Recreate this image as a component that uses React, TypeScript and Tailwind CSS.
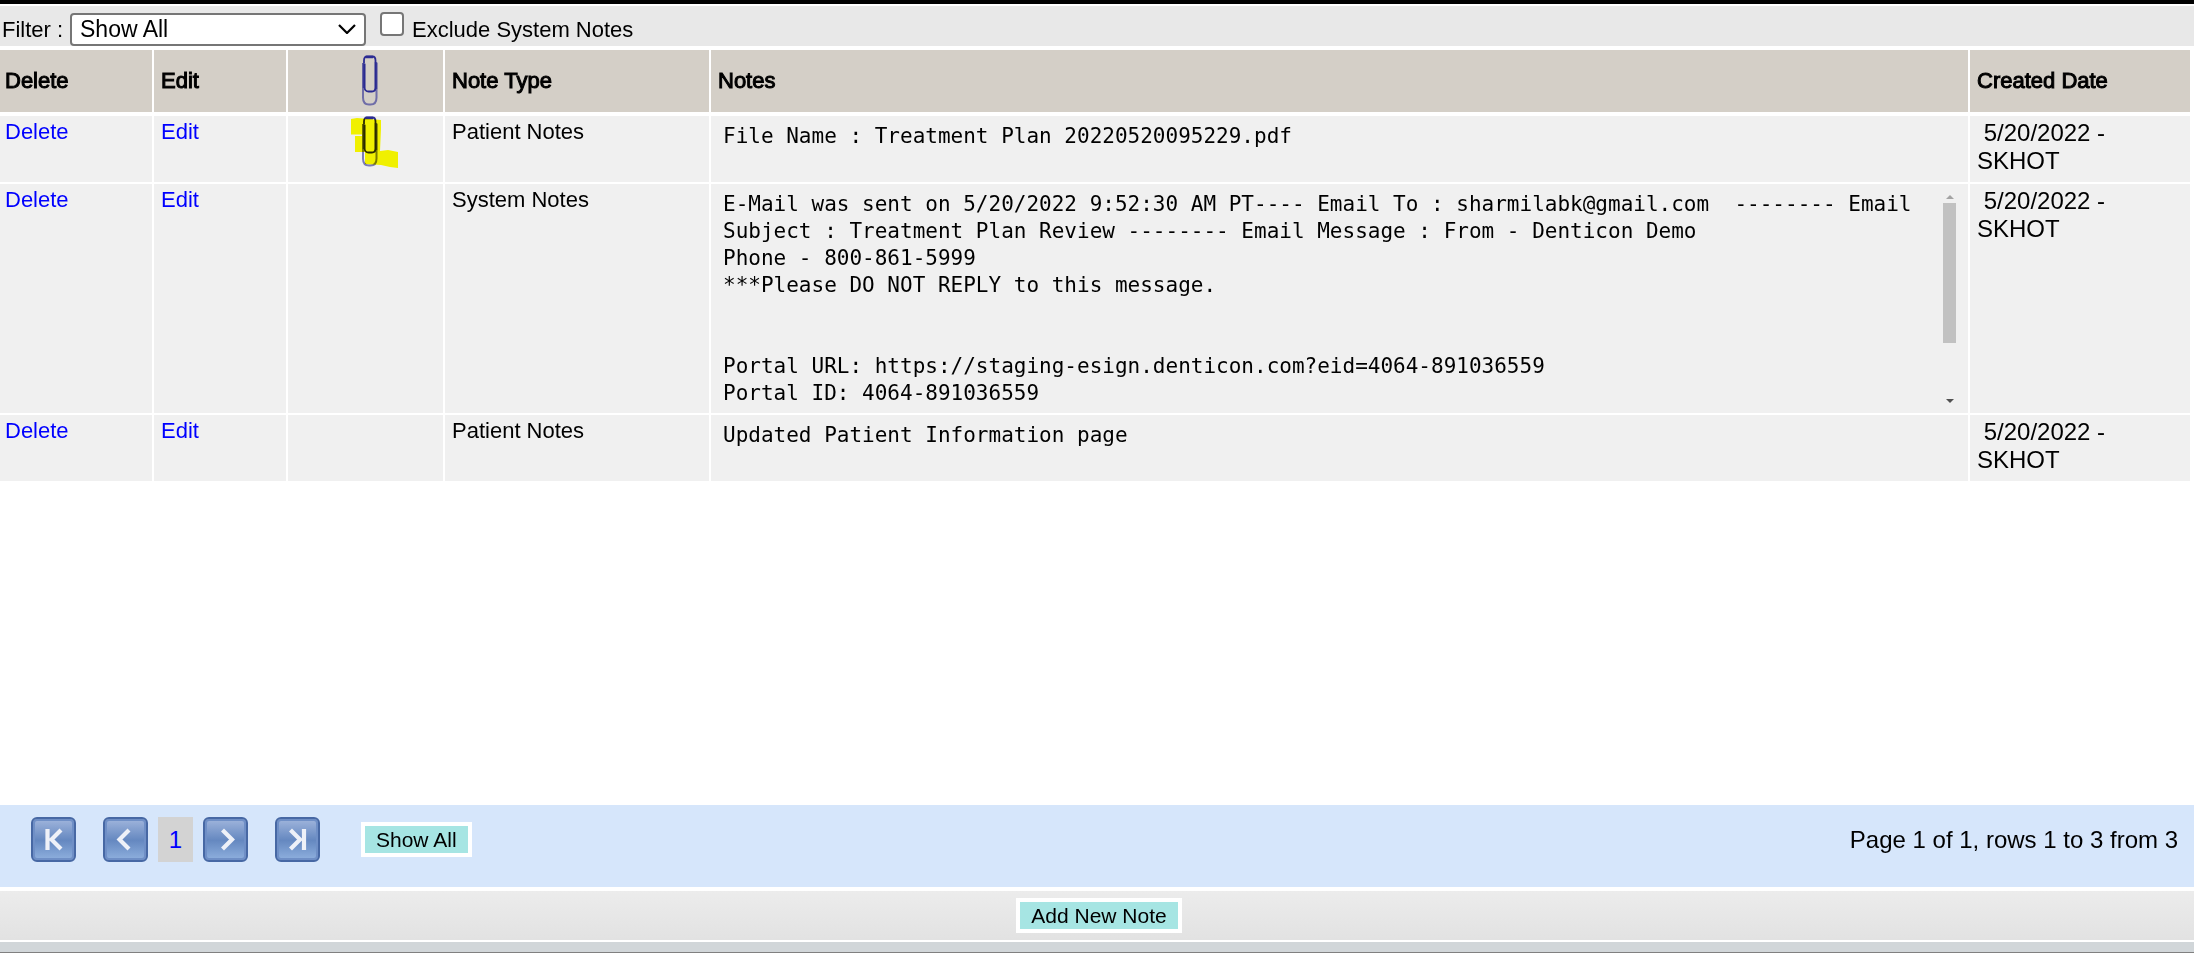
import React from "react";

type Note = {
  type: string;
  text: string;
  rows: number;
  attachment?: boolean;
  scroll?: boolean;
};

const NOTES: Note[] = [
  {
    type: "Patient Notes",
    text: "File Name : Treatment Plan 20220520095229.pdf",
    rows: 1,
    attachment: true,
  },
  {
    type: "System Notes",
    text:
      "E-Mail was sent on 5/20/2022 9:52:30 AM PT---- Email To : sharmilabk@gmail.com  -------- Email Subject : Treatment Plan Review -------- Email Message : From - Denticon Demo\nPhone - 800-861-5999\n***Please DO NOT REPLY to this message.\n\n\nPortal URL: https://staging-esign.denticon.com?eid=4064-891036559\nPortal ID: 4064-891036559",
    rows: 8,
    scroll: true,
  },
  { type: "Patient Notes", text: "Updated Patient Information page", rows: 1 },
];

function Clip({ highlighted = false }: { highlighted?: boolean }) {
  return (
    <svg viewBox="0 0 50 52" className="block h-[52px] w-[50px]" aria-hidden="true">
      <g fill="none" stroke="#2b2b92">
        <path d="M15 8V5.500Q15 1.500 18 1.500H23.500Q26.500 1.500 26.500 5.500V32.500Q26.500 36.500 23 36.500H19.500Q16 36.500 15.500 32.500V9" strokeWidth="1.800" />
        <path d="M17 2H24" strokeWidth="2.500" />
        <path d="M14 8V42.500Q14 49.500 20 49.500H21.500Q27.500 49.500 27.500 42.500V8" strokeWidth="2" opacity=".6" />
        <path d="M15 8V33M27 7V34" strokeWidth="2.500" opacity=".7" />
      </g>
      {highlighted && (
        <path
          d="M2 3L8 2L32 4V13L31 35L39 34L49 36V52L41 51L32 49L16 48V36H6V20H13V18.500H2Z"
          fill="#ffff00"
          className="mix-blend-multiply"
        />
      )}
    </svg>
  );
}

function ScrollRail() {
  return (
    <div className="flex w-[13px] flex-col items-center justify-between py-1" aria-hidden="true">
      <svg viewBox="0 0 8 4" className="mt-[2px] h-1 w-2">
        <path d="M4 0L8 4H0Z" fill="#a3a3a3" />
      </svg>
      <div className="mt-1 mb-auto h-[140px] w-full bg-[#c1c1c1]" />
      <svg viewBox="0 0 8 4" className="h-1 w-2">
        <path d="M0 0H8L4 4Z" fill="#505050" />
      </svg>
    </div>
  );
}

function PagerButton({ label, d }: { label: string; d: string }) {
  return (
    <button
      type="button"
      aria-label={label}
      className="size-[45px] rounded-[6px] border-2 border-[#4768a4] bg-linear-to-b from-[#a0b5dc] from-0% via-[#6588c0] via-52% to-[#8fb0de] shadow-[inset_0_0_0_2px_#6f8fc6]"
    >
      <svg viewBox="0 0 41 41" className="size-[41px]" fill="none" stroke="#eef1f8" strokeWidth="4.200">
        <path d={d} />
      </svg>
    </button>
  );
}

const head =
  "border-r-2 border-b-4 border-white bg-[#d4cfc7] p-0 pl-[7px] text-left align-middle font-normal first:pl-[5px] last:border-r-0 [-webkit-text-stroke:1px_black]";
const cell =
  "border-r-2 border-b-2 border-white bg-[#f0f0f0] p-0 pt-[3px] pl-[7px] align-top first:pl-[5px]";
const action =
  "h-[35px] border-4 border-white bg-[#a6e5e3] px-[11px] text-[21px] leading-[27px] whitespace-nowrap";

export default function App() {
  return (
    <div className="flex min-h-screen flex-col bg-white font-['Liberation_Sans',Arial,sans-serif] text-[22px] leading-[26px] text-black">
      <header className="mb-1 flex h-[46px] items-end border-t-4 border-black bg-[#e8e8e8] pl-[2px] shadow-[inset_0_2px_white]">
        <label htmlFor="filter" className="w-[68px] pb-[3px]">Filter :</label>
        <div className="relative flex">
          <select
            id="filter"
            className="h-[33px] w-[296px] appearance-none rounded-[4px] border-2 border-[#767676] bg-white pl-2 text-[23px] leading-[27px]"
          >
            <option>Show All</option>
          </select>
          <svg
            viewBox="0 0 18 10"
            className="pointer-events-none absolute top-[11px] right-[10px] h-[10px] w-[18px]"
            fill="none"
            stroke="black"
            strokeWidth="2.200"
          >
            <path d="M1 1L9 9L17 1" />
          </svg>
        </div>
        <input
          id="exclude"
          type="checkbox"
          className="mb-[10px] ml-[14px] size-6 appearance-none rounded-[4px] border-2 border-[#767676] bg-white"
        />
        <label htmlFor="exclude" className="pb-[3px] pl-2">Exclude System Notes</label>
      </header>

      <main className="flex-1 pr-1">
        <table className="w-full table-fixed border-separate border-spacing-0">
          <colgroup>
            <col className="w-[154px]" />
            <col className="w-[134px]" />
            <col className="w-[157px]" />
            <col className="w-[266px]" />
            <col />
            <col className="w-[220px]" />
          </colgroup>
          <thead>
            <tr className="h-[66px]">
              <th className={head}>Delete</th>
              <th className={head}>Edit</th>
              <th
                className="border-r-2 border-b-4 border-white bg-[#d4cfc7] p-0 pl-[61px] align-middle"
                aria-label="Attachment"
              >
                <Clip />
              </th>
              <th className={head}>Note Type</th>
              <th className={head}>Notes</th>
              <th className={head}>Created Date</th>
            </tr>
          </thead>
          <tbody>
            {NOTES.map((n, i) => (
              <tr key={i} className="h-[68px]">
                <td className={cell}>
                  <a href="#delete" className="text-[#0000ff]">Delete</a>
                </td>
                <td className={cell}>
                  <a href="#edit" className="text-[#0000ff]">Edit</a>
                </td>
                <td className="border-r-2 border-b-2 border-white bg-[#f0f0f0] p-0 pl-[61px] align-top">
                  {n.attachment && <Clip highlighted />}
                </td>
                <td className={cell}>{n.type}</td>
                <td className="border-r-2 border-b-2 border-white bg-[#f0f0f0] px-3 pt-[5px] pb-[6px] align-top">
                  <div className="flex">
                    <textarea
                      readOnly
                      aria-label={n.type}
                      rows={n.rows}
                      defaultValue={n.text}
                      className="block min-w-0 flex-1 resize-none overflow-hidden bg-transparent pt-[2px] font-['DejaVu_Sans_Mono',Consolas,monospace] text-[21px] leading-[27px]"
                    />
                    {n.scroll && <ScrollRail />}
                  </div>
                </td>
                <td className="border-b-2 border-white bg-[#f0f0f0] p-0 pt-[3px] pr-10 pl-[7px] align-top text-[24px] leading-[28px]">
                  &nbsp;5/20/2022 - SKHOT
                </td>
              </tr>
            ))}
          </tbody>
        </table>
      </main>

      <nav className="flex h-[82px] items-start bg-[#d6e6fb] pt-3 pr-4 pl-[31px] text-[24px]">
        <div className="flex items-center">
          <PagerButton label="First page" d="M14.500 10V31M28 11L18.500 20.500L28 30" />
          <div className="ml-[27px] flex gap-[10px]">
            <PagerButton label="Previous page" d="M24 11L14.500 20.500L24 30" />
            <a href="#page-1" className="flex h-[45px] w-[35px] items-center justify-center bg-[#d3d3d3] text-[#0000ff]">1</a>
            <PagerButton label="Next page" d="M17.500 11L27 20.500L17.500 30" />
          </div>
          <div className="ml-[27px] flex">
            <PagerButton label="Last page" d="M27 10V31M13.500 11L23 20.500L13.500 30" />
          </div>
          <button type="button" className={action + " ml-[41px]"}>Show All</button>
        </div>
        <p className="ml-auto flex h-[45px] items-center">Page 1 of 1, rows 1 to 3 from 3</p>
      </nav>

      <footer className="mt-1 border-b border-[#808080]">
        <div className="flex h-[49px] items-center justify-center bg-linear-to-b from-[#ececec] to-[#e2e2e2] pl-1">
          <button type="button" className={action}>Add New Note</button>
        </div>
        <div className="mt-[2px] h-[10px] bg-[#d1d6d9]" />
      </footer>
    </div>
  );
}
